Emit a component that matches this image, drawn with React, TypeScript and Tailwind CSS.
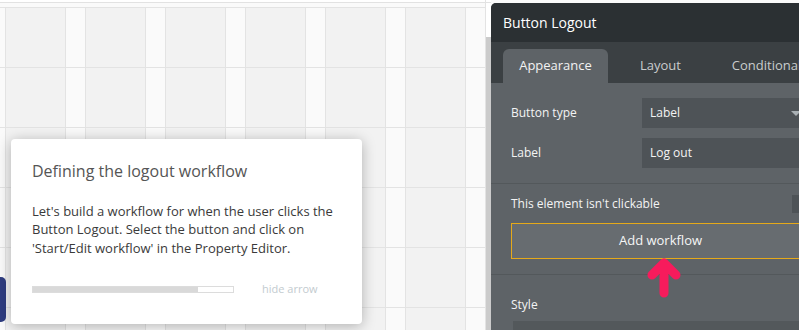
import React from "react";

const FONT = { fontFamily: '"Open Sans", "Liberation Sans", sans-serif' };

function GridRow() {
  return (
    <div className="flex h-[60px] shrink-0 border-t border-[#e3e3e3]">
      <div className="w-[5px] shrink-0" />
      {[0, 1, 2, 3, 4, 5].map((i) => (
        <React.Fragment key={i}>
          <div className="w-[61px] shrink-0 border-x border-[#e3e3e3] bg-[#f2f2f2]" />
          <div className="w-[19px] shrink-0" />
        </React.Fragment>
      ))}
    </div>
  );
}

export default function App() {
  return (
    <div
      className="relative flex h-[330px] w-[799px] overflow-hidden bg-[#fafafa]"
      style={FONT}
    >
      {/* Canvas */}
      <div className="flex w-[485px] shrink-0 flex-col">
        <div className="h-[2px] shrink-0 bg-white" />
        <div className="h-[1px] shrink-0 bg-[#e2e2e2]" />
        <div className="h-[4px] shrink-0 bg-[#fafafa]" />
        {[0, 1, 2, 3, 4, 5].map((r) => (
          <GridRow key={r} />
        ))}
      </div>

      {/* Canvas scrollbar strip */}
      <div className="flex w-[6px] shrink-0 flex-col border-l border-[#e3e3e3]">
        <div className="h-[2px] shrink-0 bg-white" />
        <div className="h-[1px] shrink-0 bg-[#e2e2e2]" />
        <div className="h-[34px] shrink-0 bg-white" />
        <div className="flex-1 bg-[#cbcbcb]" />
      </div>

      {/* Property editor panel */}
      <div className="mt-[3px] flex w-[339px] shrink-0 flex-col overflow-hidden rounded-tl-[5px] bg-[#5e6367]">
        <div className="flex h-[39px] shrink-0 items-center bg-[#2b3033] px-[12px] text-[14px] text-white">
          Button Logout
        </div>
        <div className="flex h-[41px] shrink-0 items-end bg-[#3b4043] px-[12px]">
          <div className="flex h-[34px] w-[105px] items-center justify-center rounded-t-[6px] bg-[#5e6367] text-[13px] text-[#f2f2f2]">
            Appearance
          </div>
          <div className="flex h-[34px] w-[105px] items-center justify-center text-[13px] text-[#c9cccd]">
            Layout
          </div>
          <div className="flex h-[34px] w-[105px] items-center justify-center pl-[2px] text-[13px] text-[#c9cccd]">
            Conditional
          </div>
        </div>

        <div className="flex flex-col gap-[10px] border-b border-[#53585b] px-[20px] pb-[15px] pt-[15px]">
          <div className="flex items-center">
            <div className="w-[131px] shrink-0 text-[12px] text-[#f4f4f4]">Button type</div>
            <div className="flex h-[30px] flex-1 items-center justify-between bg-[#4e5357] pl-[8px] pr-[9px] text-[12px] text-[#f4f4f4]">
              <span>Label</span>
              <svg width="10" height="5" viewBox="0 0 10 5">
                <path d="M0 0 L10 0 L5 5 Z" fill="#a9b0b4" />
              </svg>
            </div>
          </div>
          <div className="flex items-center">
            <div className="w-[131px] shrink-0 text-[12px] text-[#f4f4f4]">Label</div>
            <div className="flex h-[30px] flex-1 items-center bg-[#4e5357] pl-[8px] text-[12px] text-[#f4f4f4]">
              Log out
            </div>
          </div>
        </div>

        <div className="flex flex-col border-b border-[#53585b] px-[20px] pb-[15px] pt-[11px]">
          <div className="flex h-[18px] items-center justify-between">
            <span className="text-[12px] text-[#f4f4f4]">This element isn't clickable</span>
            <div className="h-[18px] w-[18px] bg-[#4e5357]" />
          </div>
          <div className="mt-[10px] flex h-[36px] items-center justify-center border border-[#e5a91a] bg-[#676c70] text-[13px] text-[#f6f6f6]">
            Add workflow
          </div>
        </div>

        <div className="flex flex-col px-[20px] pt-[21px]">
          <div className="text-[12px] leading-[17px] text-[#f4f4f4]">Style</div>
          <div className="ml-[2px] mt-[8px] h-[30px] bg-[#53585b]" />
        </div>
      </div>

      {/* Blue element on canvas */}
      <div className="absolute left-0 top-[277px] h-[45px] w-[6px] rounded-r-[5px] bg-[#2f3d80]" />

      {/* Tutorial popup */}
      <div className="absolute left-[11px] top-[139px] flex w-[351px] flex-col rounded-[4px] bg-white px-[21px] pb-[27px] pt-[21px] shadow-[0_2px_14px_rgba(0,0,0,0.28)]">
        <div className="text-[16px] leading-[22px] text-[#555555]">
          Defining the logout workflow
        </div>
        <div className="mt-[20px] text-[13px] leading-[18.3px] text-[#3a3a3a]">
          Let's build a workflow for when the user clicks the Button Logout. Select the button and
          click on 'Start/Edit workflow' in the Property Editor.
        </div>
        <div className="mt-[25px] flex h-[15px] items-center">
          <div className="flex h-[7px] w-[202px] border border-[#dcdcdc] bg-white">
            <div className="h-full w-[165px] bg-[#d9d9d9]" />
          </div>
          <span className="ml-[28px] text-[11px] text-[#c3cbcf]">hide arrow</span>
        </div>
      </div>

      {/* Pink arrow */}
      <svg
        className="absolute left-[644px] top-[254px]"
        width="40"
        height="48"
        viewBox="0 0 40 48"
      >
        <path
          d="M20 39 V9 M8 21 L20 9 L32 21"
          fill="none"
          stroke="#f71b5c"
          strokeWidth="9"
          strokeLinecap="round"
          strokeLinejoin="round"
        />
      </svg>
    </div>
  );
}
